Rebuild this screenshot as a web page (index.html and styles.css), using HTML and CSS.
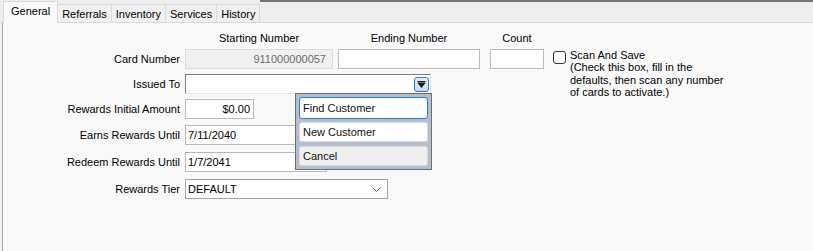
FILE: index.html
```
<!DOCTYPE html>
<html lang="en">
<head>
  <meta charset="UTF-8" />
  <title>Gift Card - General</title>
  <link rel="stylesheet" href="styles.css">
</head>
<body>
  <div class="window">
    <div class="tabstrip">
      <div class="tab active">General</div>
      <div class="tab">Referrals</div>
      <div class="tab">Inventory</div>
      <div class="tab">Services</div>
      <div class="tab">History</div>
      <div class="strip-fill"></div>
    </div>

    <div class="panel">
      <!-- column headings over the card number boxes -->
      <div class="col-heads">
        <span class="spacer"></span>
        <span class="head head-start">Starting Number</span>
        <span class="head head-end">Ending Number</span>
        <span class="head head-count">Count</span>
      </div>

      <div class="row">
        <label class="label">Card Number</label>
        <input class="textbox start-num" type="text" value="911000000057" disabled />
        <input class="textbox end-num" type="text" />
        <input class="textbox count" type="text" />
        <div class="scan">
          <span class="checkbox"></span>
          <div class="scan-text">
            Scan And Save<br>
            (Check this box, fill in the<br>
            defaults, then scan any number<br>
            of cards to activate.)
          </div>
        </div>
      </div>

      <div class="row row-issued">
        <label class="label">Issued To</label>
        <div class="combo issued">
          <span class="drop-btn">
            <svg width="13" height="13" viewBox="0 0 13 13">
              <rect x="2.5" y="3" width="8" height="1.5" fill="#1a1a1a"/>
              <polygon points="2.5,5 10.5,5 6.5,10" fill="#1a1a1a"/>
            </svg>
          </span>
        </div>
      </div>

      <div class="row row-amount">
        <label class="label">Rewards Initial Amount</label>
        <input class="textbox amount" type="text" value="$0.00" />
      </div>

      <div class="row row-earns">
        <label class="label">Earns Rewards Until</label>
        <input class="textbox date" type="text" value="7/11/2040" />
      </div>

      <div class="row row-redeem">
        <label class="label">Redeem Rewards Until</label>
        <input class="textbox date" type="text" value="1/7/2041" />
      </div>

      <div class="row row-tier">
        <label class="label">Rewards Tier</label>
        <div class="combo tier">
          <span class="combo-text">DEFAULT</span>
          <svg class="chevron" width="9" height="5" viewBox="0 0 9 5">
            <polyline points="0.5,0.5 4.5,4.5 8.5,0.5" fill="none" stroke="#606060" stroke-width="1"/>
          </svg>
        </div>
      </div>
    </div>

    <!-- drop-down menu opened from the Issued To button -->
    <div class="popup">
      <div class="popup-item focused">Find Customer</div>
      <div class="popup-item">New Customer</div>
      <div class="popup-item cancel">Cancel</div>
    </div>
  </div>
</body>
</html>
```

FILE: styles.css
```
body {
  margin: 0;
  background: #f0f0f0;
  font-family: "Liberation Sans", Arial, sans-serif;
  font-size: 11px;
  color: #000;
}
.window {
  position: relative;
  width: 813px;
  height: 251px;
  overflow: hidden;
}
.tabstrip {
  display: flex;
  height: 23px;
  background: #eeeeee;
  box-sizing: border-box;
  border-bottom: 1px solid #dadada;
}
.tab {
  margin-top: 4px;
  height: 18px;
  line-height: 18px;
  padding: 0 4px;
  background: #f0f0f0;
  border: 1px solid #d9d9d9;
  border-bottom: none;
  margin-left: -1px;
  box-sizing: border-box;
}
.tab.active {
  margin-left: 3px;
  margin-top: 1px;
  height: 22px;
  line-height: 19px;
  padding: 0 7px;
  background: #f9f9f9;
  position: relative;
  z-index: 1;
}
.strip-fill {
  flex: 1;
  border-top: 2px solid #747474;
}
.panel {
  margin-left: 2px;
  height: 228px;
  background: #f9f9f9;
  border-left: 1px solid #a9a9a9;
  box-shadow: inset 1px 0 #ffffff;
  padding-top: 9px;
  box-sizing: border-box;
}
.col-heads {
  display: flex;
  height: 13px;
  line-height: 13px;
}
.spacer {
  width: 182px;
}
.head {
  text-align: center;
}
.head-start { width: 148px; }
.head-end { width: 142px; margin-left: 5px; }
.head-count { width: 54px; margin-left: 10px; }

.row {
  display: flex;
  align-items: center;
  height: 20px;
  margin-top: 4px;
}
.row-issued { margin-top: 5px; }
.row-amount { margin-top: 5px; }
.row-earns { margin-top: 6px; }
.row-redeem { margin-top: 7px; }
.row-tier { margin-top: 7px; height: 20px; }

.label {
  width: 182px;
  padding-right: 5px;
  box-sizing: border-box;
  text-align: right;
  white-space: nowrap;
}
.textbox {
  height: 20px;
  box-sizing: border-box;
  border: 1px solid #b9b9b9;
  background: #fff;
  font-family: inherit;
  font-size: 11px;
  color: #000;
  padding: 0 2px;
  margin: 0;
  outline: none;
}
.start-num {
  width: 148px;
  background: #f0f0f0;
  border-color: #dcdcdc;
  color: #6d6d6d;
  text-align: right;
  padding-right: 6px;
}
.end-num { width: 142px; margin-left: 5px; }
.count { width: 54px; margin-left: 10px; }
.amount { width: 69px; text-align: right; padding-right: 3px; }
.date { width: 142px; }

.scan {
  display: flex;
  align-self: flex-start;
  margin-left: 9px;
}
.checkbox {
  width: 13px;
  height: 13px;
  box-sizing: border-box;
  margin-top: 2px;
  border: 1px solid #333;
  border-radius: 3px;
  background: #fff;
}
.scan-text {
  margin-left: 4px;
  line-height: 12.3px;
  white-space: nowrap;
}

.combo {
  height: 20px;
  box-sizing: border-box;
  background: #fff;
  display: flex;
  align-items: center;
}
.issued {
  width: 246px;
  border: 1px solid;
  border-color: #7e7e7e #e6e6e6 #e6e6e6 #7e7e7e;
  justify-content: flex-end;
  padding-right: 1px;
}
.drop-btn {
  width: 15px;
  height: 15px;
  box-sizing: border-box;
  border: 1px solid #2f7bd3;
  border-radius: 3px;
  background: linear-gradient(#e4eef8, #c9dcef);
  display: flex;
  align-items: center;
  justify-content: center;
  margin-top: 1px;
}
.tier {
  width: 203px;
  border: 1px solid #a3a3a3;
  padding: 0 6px 0 2px;
  justify-content: space-between;
}
.chevron {
  margin-top: 1px;
}

.popup {
  position: absolute;
  left: 295px;
  top: 93px;
  width: 137px;
  height: 77px;
  box-sizing: border-box;
  padding: 3px;
  background: #b3bfcf;
  border: 1px solid #6f6f6f;
  display: flex;
  flex-direction: column;
  gap: 3px;
}
.popup-item {
  height: 20px;
  line-height: 18px;
  box-sizing: border-box;
  padding-left: 3px;
  background: #fff;
  border: 1px solid #dadada;
  border-radius: 3px;
  color: #111;
}
.popup-item.focused {
  height: 22px;
  line-height: 20px;
  border-color: #2f78d0;
}
.popup-item.cancel {
  background: #efefef;
  margin-top: 1px;
}
```
